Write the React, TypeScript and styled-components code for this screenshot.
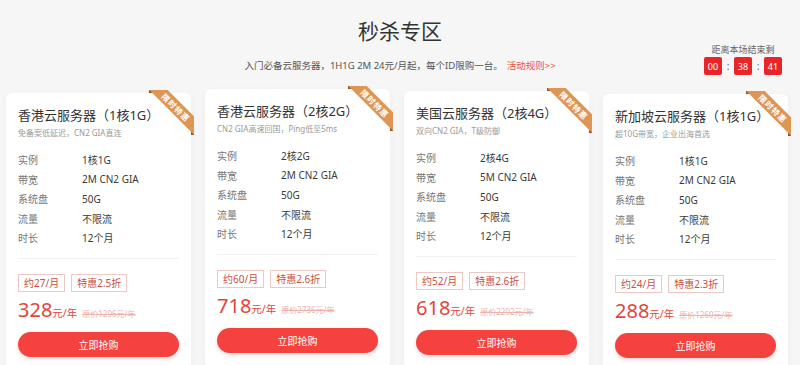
import styled, { createGlobalStyle } from "styled-components";

const GlobalStyle = createGlobalStyle`
  html, body {
    margin: 0;
    padding: 0;
    background: #f6f6f6;
    overflow: hidden;
    font-family: "Noto Sans", "Noto Sans CJK SC", sans-serif;
  }
`;

const Page = styled.div`
  width: 800px;
`;

const Header = styled.div`
  display: grid;
  grid-template-columns: 1fr auto 1fr;
  align-items: end;
  padding-top: 16px;
`;

const TitleBlock = styled.div`
  grid-column: 2;
  display: flex;
  flex-direction: column;
  align-items: center;
  padding-bottom: 2px;
`;

const Title = styled.h1`
  margin: 0;
  font-size: 21px;
  line-height: 30px;
  font-weight: 400;
  color: #333;
`;

const Intro = styled.p`
  margin: 13px 0 0;
  font-size: 9.5px;
  line-height: 14px;
  color: #555;
`;

const RuleLink = styled.a`
  color: #e9533f;
  margin-left: 4px;
  text-decoration: none;
`;

const Countdown = styled.div`
  grid-column: 3;
  justify-self: end;
  padding-right: 18px;
  display: flex;
  flex-direction: column;
  align-items: center;
`;

const CountdownLabel = styled.div`
  font-size: 9px;
  line-height: 12px;
  color: #666;
`;

const Clock = styled.div`
  display: flex;
  align-items: center;
  margin-top: 1px;
`;

const Digit = styled.span`
  width: 18px;
  height: 18px;
  border-radius: 2px;
  background: #e8262a;
  color: #fff;
  font-size: 9px;
  display: flex;
  align-items: center;
  justify-content: center;
`;

const Colon = styled.span`
  width: 12px;
  text-align: center;
  font-size: 10px;
  color: #666;
`;

const CardRow = styled.div`
  display: flex;
  align-items: flex-start;
  gap: 14px;
  padding-left: 6px;
  margin-top: 14px;
`;

const Card = styled.div<{ $offset: number }>`
  position: relative;
  width: 185px;
  box-sizing: border-box;
  margin-top: ${(p) => p.$offset}px;
  padding: 12px 12px 14px;
  background: #fff;
  border-radius: 6px;
  box-shadow: 0 2px 8px rgba(0, 0, 0, 0.04);
`;

const Ribbon = styled.div`
  position: absolute;
  top: -3px;
  right: -3px;
  width: 48px;
  height: 48px;
  overflow: hidden;
  &::before,
  &::after {
    content: "";
    position: absolute;
    background: #8c5a2b;
  }
  &::before {
    top: 0;
    left: 3px;
    width: 5px;
    height: 3px;
  }
  &::after {
    right: 0;
    bottom: 3px;
    width: 3px;
    height: 5px;
  }
`;

const RibbonBand = styled.div`
  position: absolute;
  z-index: 1;
  left: -10px;
  top: 11px;
  width: 80px;
  height: 13px;
  transform: rotate(45deg);
  background: #de9654;
  color: #fff;
  font-size: 8px;
  font-weight: 700;
  line-height: 13px;
  text-align: center;
  letter-spacing: 1px;
`;

const CardTitle = styled.div`
  font-size: 13px;
  line-height: 20px;
  color: #333;
  white-space: nowrap;
`;

const CardDesc = styled.div`
  margin-top: 2px;
  font-size: 8px;
  line-height: 12px;
  color: #999;
  white-space: nowrap;
`;

const Specs = styled.dl`
  margin: 11px 0 0;
  padding-bottom: 10px;
  border-bottom: 1px solid #f1f1f1;
  display: grid;
  grid-template-columns: 64px 1fr;
  grid-auto-rows: 19.5px;
  align-items: center;
  font-size: 10px;
`;

const SpecLabel = styled.dt`
  color: #777;
`;

const SpecValue = styled.dd`
  margin: 0;
  color: #3a3a3a;
`;

const Tags = styled.div`
  display: flex;
  gap: 6px;
  margin-top: 15px;
`;

const Tag = styled.span`
  height: 18px;
  box-sizing: border-box;
  padding: 0 5px;
  border: 1px solid #ecc9c4;
  color: #c9513f;
  font-size: 10px;
  display: flex;
  align-items: center;
`;

const PriceLine = styled.div`
  display: flex;
  align-items: baseline;
  margin-top: 7px;
  line-height: 22px;
  color: #e0463a;
`;

const Price = styled.span`
  font-size: 20px;
`;

const Unit = styled.span`
  font-size: 10.5px;
`;

const OldPrice = styled.span`
  margin-left: 5px;
  font-size: 8px;
  color: #ebb3ab;
  text-decoration: line-through;
`;

const BuyButton = styled.button`
  display: block;
  width: 100%;
  height: 25px;
  margin-top: 7px;
  border: none;
  border-radius: 13px;
  background: #f5423e;
  color: #fff;
  font-family: inherit;
  font-size: 10px;
  box-shadow: 0 2px 4px rgba(245, 66, 62, 0.2);
`;

type Plan = {
  title: string;
  desc: string;
  cpu: string;
  bandwidth: string;
  monthly: string;
  discount: string;
  price: string;
  original: string;
  offset: number;
};

const plans: Plan[] = [
  {
    title: "香港云服务器（1核1G）",
    desc: "免备案低延迟，CN2 GIA直连",
    cpu: "1核1G",
    bandwidth: "2M CN2 GIA",
    monthly: "约27/月",
    discount: "特惠2.5折",
    price: "328",
    original: "原价1296元/年",
    offset: 4,
  },
  {
    title: "香港云服务器（2核2G）",
    desc: "CN2 GIA高速回国，Ping低至5ms",
    cpu: "2核2G",
    bandwidth: "2M CN2 GIA",
    monthly: "约60/月",
    discount: "特惠2.6折",
    price: "718",
    original: "原价2736元/年",
    offset: 0,
  },
  {
    title: "美国云服务器（2核4G）",
    desc: "双向CN2 GIA，T级防御",
    cpu: "2核4G",
    bandwidth: "5M CN2 GIA",
    monthly: "约52/月",
    discount: "特惠2.6折",
    price: "618",
    original: "原价2292元/年",
    offset: 2,
  },
  {
    title: "新加坡云服务器（1核1G）",
    desc: "超10G带宽，企业出海首选",
    cpu: "1核1G",
    bandwidth: "2M CN2 GIA",
    monthly: "约24/月",
    discount: "特惠2.3折",
    price: "288",
    original: "原价1260元/年",
    offset: 5,
  },
];

function PlanCard({ plan }: { plan: Plan }) {
  const specs: [string, string][] = [
    ["实例", plan.cpu],
    ["带宽", plan.bandwidth],
    ["系统盘", "50G"],
    ["流量", "不限流"],
    ["时长", "12个月"],
  ];
  return (
    <Card $offset={plan.offset}>
      <Ribbon>
        <RibbonBand>限时特惠</RibbonBand>
      </Ribbon>
      <CardTitle>{plan.title}</CardTitle>
      <CardDesc>{plan.desc}</CardDesc>
      <Specs>
        {specs.map(([k, v]) => [
          <SpecLabel key={k}>{k}</SpecLabel>,
          <SpecValue key={k + "-v"}>{v}</SpecValue>,
        ])}
      </Specs>
      <Tags>
        <Tag>{plan.monthly}</Tag>
        <Tag>{plan.discount}</Tag>
      </Tags>
      <PriceLine>
        <Price>{plan.price}</Price>
        <Unit>元/年</Unit>
        <OldPrice>{plan.original}</OldPrice>
      </PriceLine>
      <BuyButton>立即抢购</BuyButton>
    </Card>
  );
}

export default function App() {
  return (
    <Page>
      <GlobalStyle />
      <Header>
        <TitleBlock>
          <Title>秒杀专区</Title>
          <Intro>
            入门必备云服务器，1H1G 2M 24元/月起，每个ID限购一台。
            <RuleLink>活动规则&gt;&gt;</RuleLink>
          </Intro>
        </TitleBlock>
        <Countdown>
          <CountdownLabel>距离本场结束剩</CountdownLabel>
          <Clock>
            <Digit>00</Digit>
            <Colon>:</Colon>
            <Digit>38</Digit>
            <Colon>:</Colon>
            <Digit>41</Digit>
          </Clock>
        </Countdown>
      </Header>
      <CardRow>
        {plans.map((p) => (
          <PlanCard key={p.title} plan={p} />
        ))}
      </CardRow>
    </Page>
  );
}
